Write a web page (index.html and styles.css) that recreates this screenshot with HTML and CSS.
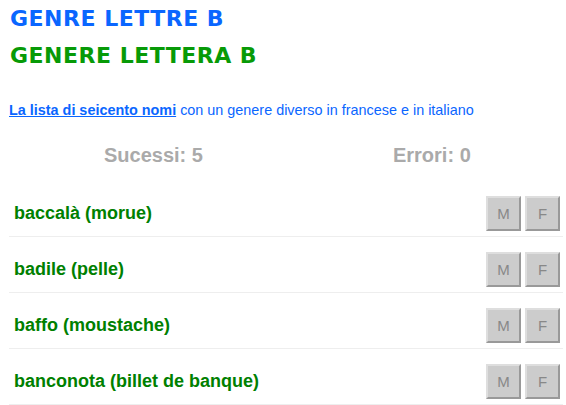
FILE: index.html
```html
<!DOCTYPE html>
<html lang="it">
<head>
<meta charset="utf-8">
<title>Genere lettera B</title>
<link rel="stylesheet" href="styles.css">
</head>
<body>
<h1 class="title title-fr">GENRE LETTRE B</h1>
<h1 class="title title-it">GENERE LETTERA B</h1>
<p class="intro"><a class="intro-link" href="#">La lista di seicento nomi</a> con un genere diverso in francese e in italiano</p>
<div class="score">
  <div class="score-item score-ok">Sucessi: 5</div>
  <div class="score-item score-ko">Errori: 0</div>
</div>
<div class="list">
  <div class="row"><span class="word">baccalà (morue)</span><div class="btns"><button class="btn">M</button><button class="btn">F</button></div></div>
  <div class="row"><span class="word">badile (pelle)</span><div class="btns"><button class="btn">M</button><button class="btn">F</button></div></div>
  <div class="row"><span class="word">baffo (moustache)</span><div class="btns"><button class="btn">M</button><button class="btn">F</button></div></div>
  <div class="row"><span class="word">banconota (billet de banque)</span><div class="btns"><button class="btn">M</button><button class="btn">F</button></div></div>
</div>
</body>
</html>
```
FILE: styles.css
```css
body {
  margin: 0;
  padding: 0 8px;
  font-family: "Liberation Sans", Arial, sans-serif;
  background: #fff;
}
.title {
  font-family: "DejaVu Sans", sans-serif;
  font-weight: bold;
  font-size: 22px;
  line-height: 37px;
  margin: 0;
  padding-left: 2px;
  letter-spacing: 0.5px;
}
.title-fr { color: #0a66ff; }
.title-it { color: #079a07; }
.intro {
  margin: 27px 0 0 1px;
  font-size: 14.4px;
  line-height: 18px;
  color: #0a66ff;
}
.intro-link {
  color: #0a66ff;
  font-weight: bold;
  text-decoration: underline;
}
.score {
  display: flex;
  margin-top: 25px;
  font-size: 20px;
  font-weight: bold;
  color: #aaa;
  line-height: 23px;
}
.score-ok { padding-left: 96px; }
.score-ko { padding-left: 190px; }
.list {
  margin: 14px -5px 0 1px;
}
.row {
  display: flex;
  align-items: center;
  justify-content: space-between;
  padding: 15px 3px 5px 5px;
  border-bottom: 1px solid #eee;
}
.word {
  color: #008000;
  font-weight: bold;
  font-size: 18px;
}
.btns {
  display: flex;
  gap: 4px;
}
.btn {
  width: 35px;
  height: 35px;
  background: #cccccc;
  border: 2px solid;
  border-color: #dedede #999 #999 #dedede;
  color: #888;
  font-family: "Liberation Sans", Arial, sans-serif;
  font-size: 15px;
  padding: 0;
}
```
